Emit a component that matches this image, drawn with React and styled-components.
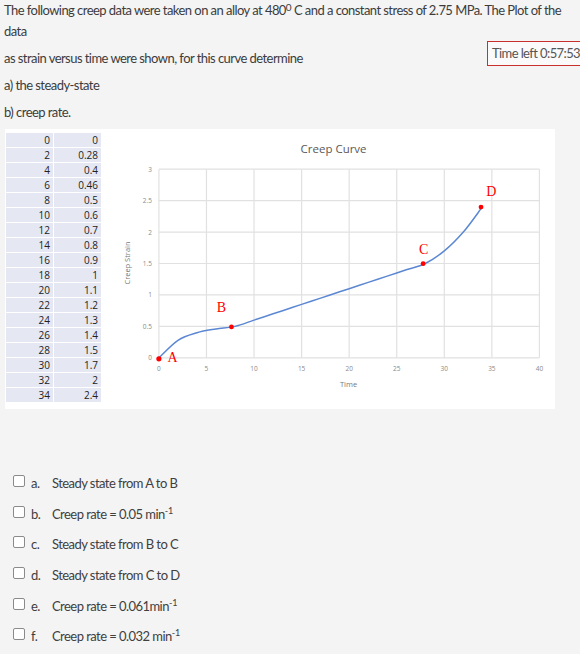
import React from "react";
import styled, { createGlobalStyle } from "styled-components";

const GlobalStyle = createGlobalStyle`
  body {
    margin: 0;
    background: #f4f4f4;
    font-family: Lato, "Open Sans", sans-serif;
    color: #3c3c3c;
  }
`;

const Page = styled.div`
  position: relative;
  width: 580px;
  height: 654px;
  overflow: hidden;
  padding: 0 0 0 4px;
  box-sizing: border-box;
`;

const Para = styled.p`
  margin: 0 0 6px;
  max-width: 572px;
  font-size: 13px;
  letter-spacing: -0.55px;
  line-height: 21px;
`;

const Deg = styled.span`
  font-size: 10px;
  vertical-align: 4px;
  line-height: 10px;
`;

const Timer = styled.div`
  position: absolute;
  top: 41px;
  left: 487px;
  width: 110px;
  height: 25px;
  box-sizing: border-box;
  border: 1px solid #c9302c;
  background: #fafafa;
  font-size: 13px;
  letter-spacing: -0.6px;
  line-height: 23px;
  padding-left: 4px;
  color: #555;
`;

const Figure = styled.div`
  display: flex;
  width: 550px;
  height: 280px;
  margin: 2px 0 0 1px;
  background: #fff;
`;

const DataTable = styled.div`
  display: grid;
  grid-template-columns: 47px 47px;
  grid-auto-rows: 15px;
  column-gap: 1px;
  padding: 4px 0 0 1px;
  width: 100px;
`;

const Cell = styled.div`
  background: #e5e8f2;
  border-bottom: 1px solid #fff;
  font-family: "Open Sans", sans-serif;
  font-size: 10px;
  line-height: 14px;
  text-align: right;
  padding-right: 3px;
  color: #222;
`;

const Options = styled.div`
  display: flex;
  flex-direction: column;
  margin-top: 59px;
  padding-left: 9px;
`;

const Option = styled.label`
  display: flex;
  align-items: center;
  height: 30.6px;
  font-size: 13px;
  letter-spacing: -0.55px;
  color: #404040;
  sup {
    font-size: 9px;
    line-height: 0;
    letter-spacing: 0;
  }
`;

const Box = styled.span`
  width: 10px;
  height: 10px;
  border: 1px solid #8a8a8a;
  border-radius: 2px;
  background: #fff;
  margin-right: 6px;
  margin-top: -4px;
`;

const Letter = styled.span`
  width: 21px;
`;

const data = [
  [0, 0], [2, 0.28], [4, 0.4], [6, 0.46], [8, 0.5], [10, 0.6], [12, 0.7],
  [14, 0.8], [16, 0.9], [18, 1], [20, 1.1], [22, 1.2], [24, 1.3], [26, 1.4],
  [28, 1.5], [30, 1.7], [32, 2], [34, 2.4],
];

const X0 = 53;
const XS = 9.53;
const Y0 = 229;
const YS = 63;
const px = (x) => X0 + x * XS;
const py = (y) => Y0 - y * YS;

function curvePath() {
  const p = data.map(([x, y]) => [px(x), py(y)]);
  let d = `M${p[0][0]},${p[0][1]}`;
  for (let i = 0; i < p.length - 1; i++) {
    const a = p[i - 1] || p[i];
    const b = p[i];
    const c = p[i + 1];
    const e = p[i + 2] || c;
    const c1 = [b[0] + (c[0] - a[0]) / 6, b[1] + (c[1] - a[1]) / 6];
    const c2 = [c[0] - (e[0] - b[0]) / 6, c[1] - (e[1] - b[1]) / 6];
    d += ` C${c1[0].toFixed(1)},${c1[1].toFixed(1)} ${c2[0].toFixed(1)},${c2[1].toFixed(1)} ${c[0].toFixed(1)},${c[1].toFixed(1)}`;
  }
  return d;
}

const Chart = () => {
  const xs = [0, 5, 10, 15, 20, 25, 30, 35, 40];
  const ys = [0, 0.5, 1, 1.5, 2, 2.5, 3];
  const tick = { fontFamily: "'Open Sans', sans-serif", fontSize: 6.5, fill: "#8a8a8a" };
  const mark = { fontFamily: "'Liberation Serif', serif", fontSize: 14, fill: "#ff0000" };
  return (
    <svg width="450" height="280" viewBox="0 0 450 280">
      {xs.map((x) => (
        <line key={"v" + x} x1={px(x)} x2={px(x)} y1={py(3)} y2={py(0)} stroke="#e1e1e1" strokeWidth="1.2" />
      ))}
      {ys.map((y) => (
        <line key={"h" + y} x1={px(0)} x2={px(40)} y1={py(y)} y2={py(y)} stroke="#e1e1e1" strokeWidth="1.2" />
      ))}
      {ys.map((y) => (
        <text key={"yl" + y} x={46} y={py(y) + 2.5} textAnchor="end" {...tick}>{y}</text>
      ))}
      {xs.map((x) => (
        <text key={"xl" + x} x={px(x)} y={242} textAnchor="middle" {...tick}>{x}</text>
      ))}
      <text x={228} y={24} textAnchor="middle" fontFamily="'Open Sans', sans-serif" fontSize="11.5" fill="#595959">Creep Curve</text>
      <text x={243} y={258} textAnchor="middle" fontFamily="'Open Sans', sans-serif" fontSize="7.5" fill="#777">Time</text>
      <text transform="translate(24 134) rotate(-90)" textAnchor="middle" fontFamily="'Open Sans', sans-serif" fontSize="7.5" fill="#777">Creep Strain</text>
      <path d={curvePath()} fill="none" stroke="#5b87d3" strokeWidth="1.5" />
      <circle cx={px(0)} cy={py(0) + 1} r="2.6" fill="#ff0000" />
      <circle cx={125.7} cy={198} r="2.4" fill="#ff0000" />
      <circle cx={317.7} cy={134.7} r="2.4" fill="#ff0000" />
      <circle cx={375.7} cy={78} r="2.4" fill="#ff0000" />
      <text x={66.7} y={233} textAnchor="middle" {...mark}>A</text>
      <text x={115.7} y={183} textAnchor="middle" {...mark}>B</text>
      <text x={318.3} y={125} textAnchor="middle" {...mark}>C</text>
      <text x={386} y={67} textAnchor="middle" {...mark}>D</text>
    </svg>
  );
};

const options = [
  ["a.", <>Steady state from A to B</>],
  ["b.", <>Creep rate = 0.05 min<sup>-1</sup></>],
  ["c.", <>Steady state from B to C</>],
  ["d.", <>Steady state from C to D</>],
  ["e.", <>Creep rate = 0.061min<sup>-1</sup></>],
  ["f.", <>Creep rate = 0.032 min<sup>-1</sup></>],
];

export default function App() {
  return (
    <Page>
      <GlobalStyle />
      <Para>
        The following creep data were taken on an alloy at 480<Deg>0</Deg> C and a constant stress of 2.75 MPa. The Plot of the data
      </Para>
      <Para>as strain versus time were shown, for this curve determine</Para>
      <Para>a) the steady-state</Para>
      <Para>b) creep rate.</Para>
      <Figure>
        <DataTable>
          {data.map(([t, s]) => (
            <React.Fragment key={t}>
              <Cell>{t}</Cell>
              <Cell>{s}</Cell>
            </React.Fragment>
          ))}
        </DataTable>
        <Chart />
      </Figure>
      <Options>
        {options.map(([l, txt]) => (
          <Option key={l}>
            <Box />
            <Letter>{l}</Letter>
            <span>{txt}</span>
          </Option>
        ))}
      </Options>
      <Timer>Time left 0:57:53</Timer>
    </Page>
  );
}
